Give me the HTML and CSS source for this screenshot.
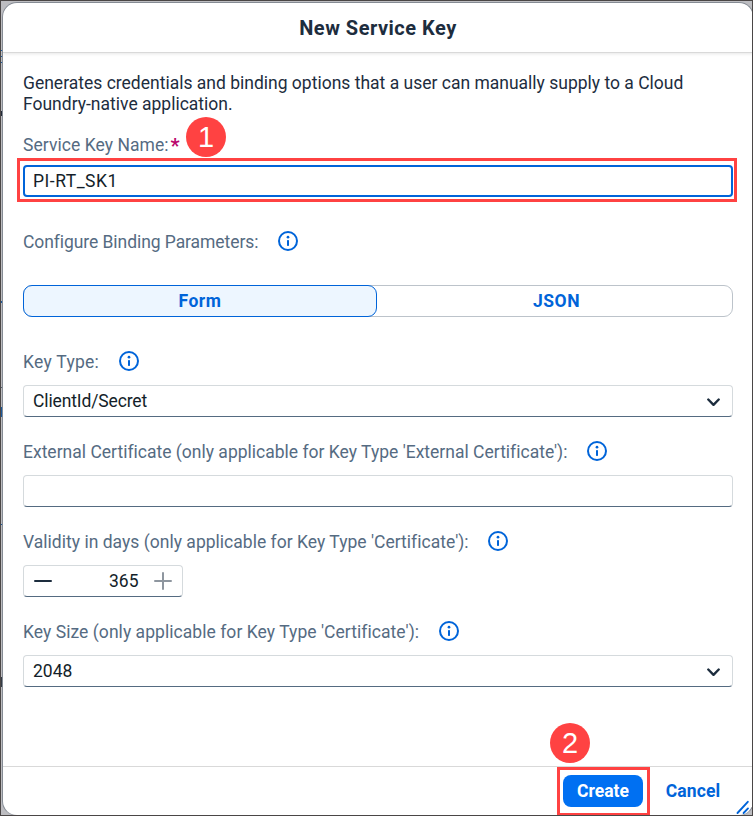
FILE: index.html
```html
<!DOCTYPE html>
<html lang="en">
<head>
<meta charset="utf-8">
<title>New Service Key</title>
<link rel="stylesheet" href="styles.css">
</head>
<body>
<svg class="defs" aria-hidden="true">
  <symbol id="info" viewBox="0 0 20 20"><circle cx="10" cy="10" r="9" fill="none" stroke="currentColor" stroke-width="2"/><circle cx="10" cy="6.2" r="1.35" fill="currentColor"/><rect x="9" y="9" width="2" height="6" rx=".7" fill="currentColor"/></symbol>
  <symbol id="chevron" viewBox="0 0 13 9"><path d="M1.3 1.5l5.2 5.3 5.2-5.3" fill="none" stroke="currentColor" stroke-width="2.4" stroke-linecap="round" stroke-linejoin="round"/></symbol>
</svg>
<div class="frame">
  <div class="backdrop">
    <i class="mark m1"></i><i class="mark m2"></i><i class="mark m3"></i><i class="mark m4"></i><i class="mark m5"></i><i class="mark m6"></i><i class="mark m7"></i><i class="mark m8"></i><i class="mark m9"></i>
  </div>
  <section class="dialog">
    <header class="head"><h1>New Service Key</h1></header>
    <main class="content">
      <p class="desc">Generates credentials and binding options that a user can manually supply to a Cloud<br>Foundry-native application.</p>
      <div class="label-row first"><label class="t-name">Service Key Name:</label><span class="req">*</span></div>
      <div class="input focused"><span class="t-value">PI-RT_SK1</span><div class="callout-box"></div><div class="badge one">1</div></div>
      <div class="label-row config"><label class="t-config">Configure Binding Parameters:</label><svg class="info"><use href="#info"/></svg></div>
      <div class="segmented"><div class="seg selected">Form</div><div class="seg json">JSON</div></div>
      <div class="label-row after-segmented"><label class="t-type">Key Type:</label><svg class="info"><use href="#info"/></svg></div>
      <div class="input"><span class="t-client">ClientId/Secret</span><svg class="chevron"><use href="#chevron"/></svg></div>
      <div class="label-row"><label class="t-ext">External Certificate (only applicable for Key Type 'External Certificate'):</label><svg class="info"><use href="#info"/></svg></div>
      <div class="input"></div>
      <div class="label-row"><label class="t-valid">Validity in days (only applicable for Key Type 'Certificate'):</label><svg class="info"><use href="#info"/></svg></div>
      <div class="input stepper"><svg class="minus" viewBox="0 0 18 18"><path d="M1 9h16" stroke="currentColor" stroke-width="2" stroke-linecap="round"/></svg><span class="days">365</span><svg class="plus" viewBox="0 0 18 18"><path d="M1 9h16M9 1v16" stroke="currentColor" stroke-width="2" stroke-linecap="round"/></svg></div>
      <div class="label-row"><label class="t-size">Key Size (only applicable for Key Type 'Certificate'):</label><svg class="info"><use href="#info"/></svg></div>
      <div class="input"><span>2048</span><svg class="chevron"><use href="#chevron"/></svg></div>
    </main>
    <footer class="foot">
      <button class="create">Create</button>
      <button class="cancel">Cancel</button>
      <div class="callout-box"></div><div class="badge two">2</div>
      <svg class="grip" viewBox="0 0 16 16"><path d="M16 8v8H8z" fill="#b4b6ba"/><path d="M1.5 13L11.8 1.8M7.6 13L12 8.4" stroke="currentColor" stroke-width="1.9" stroke-linecap="round"/></svg>
    </footer>
  </section>
</div>
</body>
</html>
```
FILE: styles.css
```css
* { box-sizing: border-box; }
body { margin: 0; width: 753px; height: 816px; overflow: hidden; font-family: Roboto, sans-serif; font-size: 17.5px; color: #131e29; }
.defs { position: absolute; width: 0; height: 0; }
.frame { position: relative; width: 753px; height: 816px; border: 1px solid #4a4646; background: #bdbdc1; overflow: hidden; }
.backdrop { position: absolute; inset: 0; }
.mark { position: absolute; left: 0; width: 2px; height: 1px; background: #1c5a9c; }
.m1 { top: 49px; } .m2 { top: 55px; } .m3 { top: 61px; }
.m4 { top: 110px; height: 5px; background: #222b38; }
.m5 { top: 300px; height: 2px; }
.m6 { top: 386px; background: #555e68; }
.m7 { top: 406px; height: 10px; }
.m8 { top: 523px; }
.m9 { top: 676px; height: 10px; background: #343c46; }
.dialog { position: relative; display: flex; flex-direction: column; width: 752px; height: 814px; margin: 1px 0 0 1px; border: 1px solid #858b94; border-bottom-color: #a0a4ab; border-radius: 15px; background: #fff; overflow: hidden; }
.head { flex: 0 0 50px; display: flex; align-items: center; justify-content: center; border-bottom: 1px solid #d9d9d9; box-shadow: 0 1px 3px #00000018; }
h1 { margin: 0; font-size: 20px; line-height: 24px; font-weight: 700; letter-spacing: .5px; color: #1d2d3e; }
.content { flex: 1; padding: 20px 20px 0; }
.desc { margin: 0; line-height: 21px; color: #1d2d3e; white-space: nowrap; }
.label-row { display: flex; align-items: center; height: 22px; margin: 23px 0 13px; color: #556b82; white-space: nowrap; }
.label-row label { padding-top: 1px; }
.label-row.first { margin: 18px 0 10px; }
.label-row.config { margin: 33px 0; }
.label-row.after-segmented { margin-top: 33px; }
.info { width: 20px; height: 20px; margin-left: 19.5px; color: #0064d9; }
.req { margin-left: 2px; padding-top: 3px; color: #ba066c; font-size: 20px; font-weight: 700; }
.t-name { letter-spacing: .05px; }
.t-value { letter-spacing: .5px; }
.t-config { letter-spacing: -.07px; }
.t-type { letter-spacing: .27px; }
.t-client { letter-spacing: -.13px; }
.t-ext { letter-spacing: .005px; }
.t-valid { letter-spacing: .018px; }
.t-size { letter-spacing: .05px; }
.input { position: relative; display: flex; align-items: center; height: 32px; padding: 0 9px; border: 1px solid #d5dadd; border-bottom-color: #556b81; border-radius: 4px; background: #fff; }
.input.focused { border: 2px solid #0064d9; padding: 0 8px; }
.chevron { width: 13px; height: 9px; margin: 2px 3px 0 auto; color: #1d2d3e; }
.segmented { display: flex; height: 32px; border: 1px solid #bcc3ca; border-radius: 9px; }
.seg { flex: 1; display: flex; align-items: center; justify-content: center; color: #0064d9; font-weight: 700; letter-spacing: .5px; }
.seg.selected { flex: 0 0 354px; margin: -1px 0 -1px -1px; border: 1px solid #0064d9; border-radius: 9px; background: #edf6ff; }
.seg.json { padding-left: 4px; }
.stepper { width: 160px; }
.minus, .plus { width: 18px; height: 18px; color: #1d2d3e; }
.minus { margin-left: 1px; }
.plus { margin-right: 1px; color: #8e969f; }
.days { margin-left: auto; margin-right: 15.5px; }
.foot { position: relative; flex: 0 0 49px; display: flex; align-items: center; padding-left: 560px; border-top: 1px solid #d9d9d9; }
button { height: 32px; padding: 0; border: 0; border-radius: 8px; background: none; font: 700 17.5px Roboto, sans-serif; color: #0064d9; }
.create { width: 80px; background: #0070f2; color: #fff; }
.cancel { width: 76px; margin-left: 12px; letter-spacing: .1px; }
.callout-box { position: absolute; border: 3px solid #ff4242; }
.focused .callout-box { inset: -9px -6px -7px -8px; }
.foot .callout-box { left: 554px; top: 0; width: 93px; height: 49px; }
.badge { position: absolute; width: 40px; height: 40px; border-radius: 50%; background: #ff4242; color: #fff; font: 29px/40px "Liberation Sans", sans-serif; text-align: center; }
.one { left: 161px; top: -50px; }
.two { left: 547px; top: -44px; }
.grip { position: absolute; left: 733px; bottom: -1px; width: 16px; height: 16px; color: #0064d9; }
```
